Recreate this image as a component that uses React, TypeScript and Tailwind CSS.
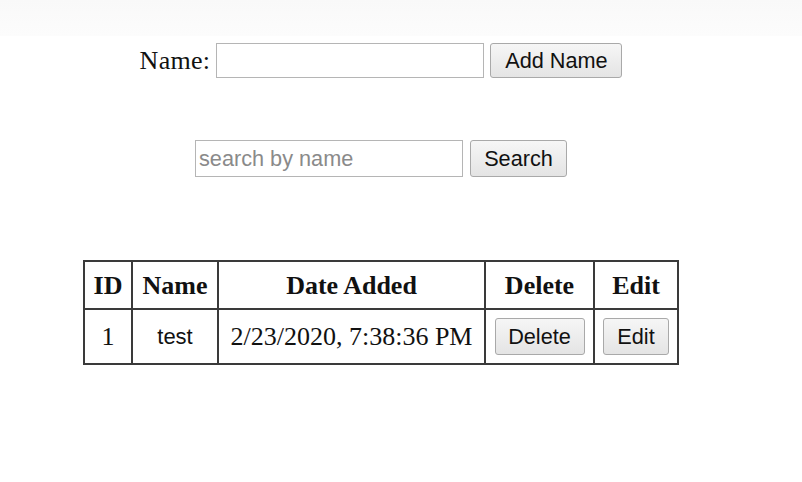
import React from "react";

const btn =
  "h-full border border-[#a9a9a9] rounded-[3px] bg-gradient-to-b from-[#f6f6f6] to-[#e4e4e4] text-[#111] text-[21.7px] leading-none [font-family:'Liberation_Sans',Arial,sans-serif]";

export default function App() {
  return (
    <div className="w-[802px] h-[482px] bg-white text-[#111] [font-family:'Liberation_Serif','Times_New_Roman',serif] text-[26px] overflow-hidden">
      <div className="h-[36px] bg-gradient-to-b from-[#f9f9f9] to-[#fcfcfc]" />
      <div className="w-[762px] flex flex-col items-center">
        <div className="mt-[7px] h-[35px] flex items-center gap-[6px]">
          <span className="leading-none tracking-[0.3px]">Name:</span>
          <input
            className="w-[268px] h-[35px] border border-[#b5b5b5] bg-white outline-none"
            type="text"
          />
          <button className={btn + " w-[132px]"}>Add Name</button>
        </div>
        <div className="mt-[62px] h-[37px] flex items-center gap-[7px]">
          <input
            className="w-[268px] h-[37px] border border-[#b5b5b5] bg-white outline-none px-[3px] text-[21.7px] [font-family:'Liberation_Sans',Arial,sans-serif] placeholder:text-[#8a8a8a]"
            placeholder="search by name"
            type="text"
          />
          <button className={btn + " w-[97px]"}>Search</button>
        </div>
        <table className="mt-[83px] border-collapse table-fixed w-[594px]">
          <thead>
            <tr className="h-[48px]">
              <th className="w-[48px] border-2 border-[#3a3a3a] font-bold">ID</th>
              <th className="w-[86px] border-2 border-[#3a3a3a] font-bold">Name</th>
              <th className="w-[267px] border-2 border-[#3a3a3a] font-bold">Date Added</th>
              <th className="w-[109px] border-2 border-[#3a3a3a] font-bold">Delete</th>
              <th className="w-[84px] border-2 border-[#3a3a3a] font-bold">Edit</th>
            </tr>
          </thead>
          <tbody>
            <tr className="h-[55px]">
              <td className="border-2 border-[#3a3a3a] text-center">1</td>
              <td className="border-2 border-[#3a3a3a] text-center text-[22px] [font-family:'Liberation_Sans',Arial,sans-serif]">test</td>
              <td className="border-2 border-[#3a3a3a] text-center whitespace-nowrap">2/23/2020, 7:38:36 PM</td>
              <td className="border-2 border-[#3a3a3a] text-center">
                <div className="flex justify-center h-[37px]">
                  <button className={btn + " w-[90px]"}>Delete</button>
                </div>
              </td>
              <td className="border-2 border-[#3a3a3a] text-center">
                <div className="flex justify-center h-[37px]">
                  <button className={btn + " w-[66px]"}>Edit</button>
                </div>
              </td>
            </tr>
          </tbody>
        </table>
      </div>
    </div>
  );
}
